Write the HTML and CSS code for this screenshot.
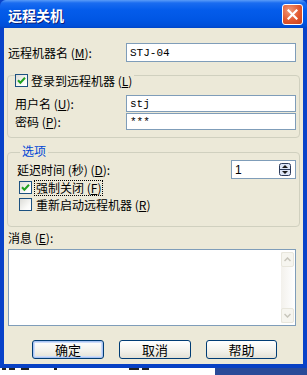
FILE: index.html
```html
<!DOCTYPE html>
<html lang="zh-CN">
<head>
  <meta charset="UTF-8">
  <meta name="viewport" content="width=device-width, initial-scale=1.0">
  <title>远程关机</title>
  <link rel="stylesheet" href="styles.css">
</head>
<body>
  <div class="window">
    <div class="title_bar">
      <span class="title_text">远程关机</span>
      <span class="close_btn">
        <svg width="11" height="11" viewBox="0 0 11 11"><path d="M1.5 1.5L9.5 9.5M9.5 1.5L1.5 9.5" stroke="#fff" stroke-width="2.2" stroke-linecap="square"/></svg>
      </span>
    </div>
    <div class="content">
      <div class="row row_top">
        <span class="label">远程机器名 (<u>M</u>):</span>
        <div class="edit edit_big">STJ-04</div>
      </div>

      <div class="group group_login">
        <div class="group_title">
          <span class="check"><svg width="9" height="9" viewBox="0 0 9 9"><path d="M1 4.2L3.4 6.8L8 1.8" fill="none" stroke="#21a121" stroke-width="2"/></svg></span>
          <span>登录到远程机器 (<u>L</u>)</span>
        </div>
        <div class="row row_field">
          <span class="label">用户名 (<u>U</u>):</span>
          <div class="edit">stj</div>
        </div>
        <div class="row row_field">
          <span class="label">密码 (<u>P</u>):</span>
          <div class="edit">***</div>
        </div>
      </div>

      <div class="group group_opts">
        <div class="legend">选项</div>
        <div class="row row_delay">
          <span class="label">延迟时间 (秒) (<u>D</u>):</span>
          <div class="edit edit_spin">
            <span>1</span>
            <span class="spin">
              <svg width="12" height="13" viewBox="0 0 12 13">
                <rect x="0.5" y="0.5" width="11" height="12" rx="2" fill="#dde6f7" stroke="#2b3a5a"/>
                <line x1="1" y1="6.5" x2="11" y2="6.5" stroke="#2b3a5a"/>
                <path d="M3 5L6 2L9 5Z" fill="#1a1a1a"/>
                <path d="M3 8L6 11L9 8Z" fill="#1a1a1a"/>
              </svg>
            </span>
          </div>
        </div>
        <div class="row row_check">
          <span class="check"><svg width="9" height="9" viewBox="0 0 9 9"><path d="M1 4.2L3.4 6.8L8 1.8" fill="none" stroke="#21a121" stroke-width="2"/></svg></span>
          <span class="focus_text">强制关闭 (<u>F</u>)</span>
        </div>
        <div class="row row_check">
          <span class="check"></span>
          <span class="check_text">重新启动远程机器 (<u>R</u>)</span>
        </div>
      </div>

      <div class="msg_label">消息 (<u>E</u>):</div>
      <div class="memo">
        <div class="scroll_bar">
          <span class="scroll_btn"><svg width="7" height="5" viewBox="0 0 7 5"><path d="M0.5 4L3.5 1L6.5 4" fill="none" stroke="#c8c6bb" stroke-width="1.5"/></svg></span>
          <span class="scroll_btn"><svg width="7" height="5" viewBox="0 0 7 5"><path d="M0.5 1L3.5 4L6.5 1" fill="none" stroke="#c8c6bb" stroke-width="1.5"/></svg></span>
        </div>
      </div>

      <div class="btn_row">
        <span class="btn btn_default">确定</span>
        <span class="btn">取消</span>
        <span class="btn">帮助</span>
      </div>
    </div>
  </div>
  <div class="desktop">
    <div class="desk_white">
      <span class="mark m1"></span><span class="mark m2"></span><span class="mark m3"></span>
      <span class="mark m4"></span><span class="mark m5"></span><span class="mark m6"></span>
    </div>
    <div class="desk_blue"></div>
  </div>
</body>
</html>
```

FILE: styles.css
```css
*{margin:0;padding:0;box-sizing:border-box;}
html,body{width:100%;height:100%;overflow:hidden;}
body{font-family:"Noto Sans CJK SC",sans-serif;font-size:12px;color:#000;background:#fff;}
u{text-decoration:underline;text-underline-offset:1px;}

.window{width:307px;height:368px;display:flex;flex-direction:column;background:#0054e3;border-left:4px solid #0842c9;border-right:4px solid #0842c9;border-bottom:4px solid #0841c4;}
.title_bar{height:28px;margin:0 -4px;padding:0 4px 0 8px;display:flex;align-items:center;justify-content:space-between;background:linear-gradient(to bottom,#5a9cf8 0,#1a6cf0 3px,#045ceb 10px,#0056e4 20px,#004fd8 26px,#0046c8 28px);border-radius:6px 6px 0 0;}
.title_text{color:#fff;font-weight:bold;font-size:14px;text-shadow:1px 1px 0 #0a1e7a;padding-top:1px;}
.close_btn{width:21px;height:21px;display:flex;align-items:center;justify-content:center;border:1px solid #fff;border-radius:3px;background:radial-gradient(circle at 35% 30%,#f09a7a 0,#e2582f 55%,#c8401c 100%);}

.content{flex:1;background:#ece9d8;padding:15px 3px 0;display:flex;flex-direction:column;}
.row{display:flex;align-items:center;justify-content:space-between;}
.row_top{height:19px;padding:0 4px 0 1px;}
.label{white-space:nowrap;}
.edit{width:170px;height:17px;background:#fff;border:1px solid #7f9db9;font-family:"Liberation Mono",monospace;font-size:11px;padding-left:3px;display:flex;align-items:center;}
.edit_big{height:19px;}

.group{border:1px solid #d0d0bf;border-radius:4px;display:flex;flex-direction:column;}
.group_login{margin-top:13px;height:63px;padding:0 3px 0 7px;}
.group_title{display:flex;align-items:center;gap:3px;margin-top:-2px;height:13px;align-self:flex-start;background:#ece9d8;padding-right:2px;}
.row_field{height:17px;margin-top:1px;}
.row_field:nth-child(2){margin-top:8px;}

.check{width:13px;height:13px;border:1px solid #1c5180;background:linear-gradient(135deg,#dcdcd7 0,#fbfbf9 70%,#fff 100%);display:flex;align-items:center;justify-content:center;}

.group_opts{margin-top:14px;height:75px;padding:0 3px 0 9px;}
.legend{margin-top:-9px;margin-left:3px;align-self:flex-start;color:#0046d5;background:#ece9d8;padding:0 2px;line-height:14px;}
.row_delay{height:19px;margin-top:2px;}
.edit_spin{width:65px;height:19px;justify-content:space-between;padding-right:4px;font-family:"Liberation Sans",sans-serif;font-size:12px;}
.spin{display:flex;}
.row_check{justify-content:flex-start;gap:3px;height:17px;margin-left:2px;}
.row_check:nth-of-type(2){margin-top:5px;}
.focus_text{outline:1px dotted #000;outline-offset:0;padding:0 1px;line-height:14px;}
.check_text{padding:0 1px;}

.msg_label{margin:3px 0 0 1px;line-height:16px;}
.memo{margin:3px 4px 0 1px;height:77px;background:#fff;border:1px solid #7f9db9;display:flex;justify-content:flex-end;}
.scroll_bar{width:13px;margin:2px 1px 2px 0;background:linear-gradient(to right,#f3f1ec,#fefefe);display:flex;flex-direction:column;justify-content:space-between;}
.scroll_btn{height:15px;border:1px solid #e8e6dc;border-radius:2px;background:#f6f5ef;display:flex;align-items:center;justify-content:center;}

.btn_row{margin-top:14px;display:flex;padding-left:25px;gap:15px;}
.btn{width:72px;height:19px;border:1px solid #003c74;border-radius:3px;background:linear-gradient(to bottom,#fff 0,#f2f1ea 60%,#e3e1d6 100%);display:flex;align-items:center;justify-content:center;font-size:13px;}
.btn:nth-child(3){width:71px;}
.btn_default{box-shadow:inset 0 0 0 1px #a8c4f4,inset 0 0 0 2px #cedcf8;}

.desktop{height:7px;display:flex;}
.desk_white{width:215px;background:#fff;display:flex;align-items:flex-start;}
.mark{height:2px;background:#222;}
.m1{width:4px;margin-left:2px;}
.m2{width:6px;margin-left:3px;}
.m3{width:8px;margin-left:6px;}
.m4{width:3px;margin-left:25px;}
.m5{width:10px;margin-left:72px;}
.m6{width:7px;margin-left:3px;}
.desk_blue{flex:1;background:#2a4a98;}
```
